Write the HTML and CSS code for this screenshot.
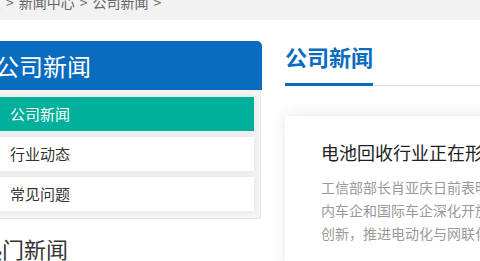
FILE: index.html
```html
<!DOCTYPE html>
<html lang="zh-CN">
<head>
<meta charset="utf-8">
<title>公司新闻</title>
<link rel="stylesheet" href="styles.css">
</head>
<body>
<div class="crumb-bar">
  <div class="crumb"><a class="crumb-home" href="#">首页</a><span class="sep">&gt;</span><span>新闻中心</span><span class="sep">&gt;</span><span>公司新闻</span><span class="sep">&gt;</span></div>
</div>
<div class="wrap">
  <aside class="sidebar">
    <h2 class="side-title">公司新闻</h2>
    <ul class="side-menu">
      <li class="side-item active">公司新闻</li>
      <li class="side-item">行业动态</li>
      <li class="side-item">常见问题</li>
    </ul>
    <h3 class="hot-title">热门新闻</h3>
  </aside>
  <main class="content">
    <div class="content-head"><span class="content-title">公司新闻</span></div>
    <article class="news-card">
      <h4 class="news-title">电池回收行业正在形成千亿级市场</h4>
      <p class="news-desc">工信部部长肖亚庆日前表明，将大力支持国内车企和国际车企深化开放合作，加快技术创新，推进电动化与网联化融合发展。</p>
    </article>
  </main>
</div>
</body>
</html>
```

FILE: styles.css
```css
html, body {
  margin: 0;
  padding: 0;
  overflow: hidden;
  background: #fff;
  font-family: "Noto Sans CJK SC", "Noto Sans", sans-serif;
}

.crumb-bar {
  height: 20px;
  background: #f2f2f2;
  overflow: hidden;
}

.crumb {
  display: flex;
  margin-top: -5px;
  margin-left: -27px;
  font-size: 14px;
  line-height: 14px;
  color: #666;
  white-space: nowrap;
}

.crumb .sep {
  margin: 0 5px;
}

.crumb-home {
  color: #0a6cbf;
  text-decoration: none;
}

.wrap {
  display: flex;
  align-items: flex-start;
  gap: 23px;
  margin-left: -20px;
  padding-top: 21px;
  width: 900px;
}

.sidebar {
  width: 282px;
  flex: none;
}

.side-title {
  margin: 0;
  height: 49px;
  line-height: 50px;
  padding-left: 15px;
  background: #0a6cbf;
  color: #fff;
  font-size: 24px;
  font-weight: normal;
  border-top-right-radius: 5px;
}

.side-menu {
  list-style: none;
  margin: 0 1px 0 0;
  padding: 7px 6px 7px 7px;
  background: #f4f4f4;
  border-right: 1px solid #e6e6e6;
  border-bottom: 1px solid #e6e6e6;
  display: flex;
  flex-direction: column;
  gap: 6px;
}

.side-item {
  height: 34px;
  line-height: 34px;
  padding-left: 23px;
  background: #fff;
  color: #333;
  font-size: 15px;
  box-shadow: 0 0 6px rgba(0, 0, 0, 0.08);
}

.side-item.active {
  background: #00b09b;
  color: #fff;
}

.hot-title {
  margin: 14px 0 0;
  font-size: 22px;
  line-height: 30px;
  font-weight: normal;
  color: #333;
  white-space: nowrap;
}

.content {
  flex: 1;
}

.content-head {
  border-bottom: 1px solid #dedede;
  line-height: 0;
}

.content-title {
  display: inline-block;
  font-size: 22px;
  line-height: 30px;
  font-weight: bold;
  color: #0a6cbf;
  padding-bottom: 12px;
  border-bottom: 3px solid #0a6cbf;
  margin-bottom: -1px;
}

.news-card {
  margin-top: 30px;
  width: 266px;
  padding: 23px 36px 30px;
  background: #fff;
  box-shadow: 0 0 16px rgba(0, 0, 0, 0.1);
}

.news-title {
  margin: 0;
  font-size: 18px;
  line-height: 26px;
  font-weight: normal;
  color: #222;
  white-space: nowrap;
  overflow: hidden;
}

.news-desc {
  margin: 11px 0 0;
  font-size: 14px;
  line-height: 23px;
  color: #999;
}
```
